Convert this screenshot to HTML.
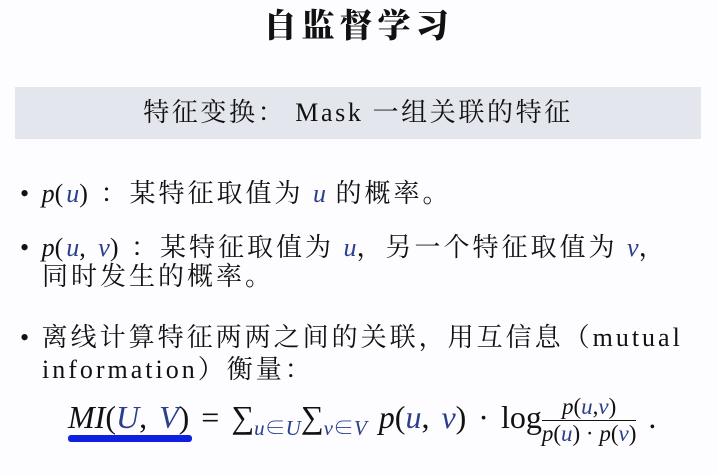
<!DOCTYPE html>
<html><head><meta charset="utf-8"><style>
body{margin:0;width:717px;height:475px;background:#fdfcfe;position:relative;overflow:hidden;font-family:"Liberation Serif","Noto Serif CJK SC",serif;color:#111}
.a{position:absolute;white-space:nowrap}
.t{left:0;width:717px;text-align:center;top:0px;font-size:33px;font-weight:900;font-family:"Noto Serif CJK SC",serif;letter-spacing:5px}
.bn{left:15px;top:87px;width:686px;height:52px;background:#e3e6ec;text-align:center;line-height:52px;font-size:26px;letter-spacing:2.6px}
.l{font-size:26px;left:20px;letter-spacing:3px}
i{font-family:"Liberation Serif",serif;letter-spacing:0}
.b{color:#2b3f8c}
.u{position:absolute;left:68px;top:435px;width:124px;height:7px;background:#1020e0;border-radius:3px}
</style></head><body>
<div class="a t">自监督学习</div>
<div class="a bn">特征变换： Mask 一组关联的特征</div>
<div class="a l" style="top:173px">• <i>p</i>(<i class="b">u</i>) ：某特征取值为 <i class="b">u</i> 的概率。</div>
<div class="a l" style="top:227px">• <i>p</i>(<i class="b">u</i>, <i class="b">v</i>) ：某特征取值为 <i class="b">u</i>，另一个特征取值为 <i class="b">v</i>，</div>
<div class="a l" style="top:256px;left:42px">同时发生的概率。</div>
<div class="a l" style="top:317px">• 离线计算特征两两之间的关联，用互信息（mutual</div>
<div class="a l" style="top:349px;left:42px">information）衡量：</div>
<div class="a" style="top:394px;left:68px;font-size:32px;word-spacing:4px"><i>MI</i>(<i class="b">U</i>, <i class="b">V</i>) = ∑<sub class="b" style="font-size:21px"><i>u</i>∈<i>U</i></sub>∑<sub class="b" style="font-size:21px"><i>v</i>∈<i>V</i></sub> <i>p</i>(<i class="b">u</i>, <i class="b">v</i>) · log<span style="display:inline-block;vertical-align:middle;text-align:center;font-size:23px;line-height:26px;word-spacing:0"><span style="display:block;border-bottom:1px solid #111"><i>p</i>(<i class="b">u</i>,<i class="b">v</i>)</span><span style="display:block"><i>p</i>(<i class="b">u</i>) · <i>p</i>(<i class="b">v</i>)</span></span> .</div>
<div class="u"></div>
</body></html>
